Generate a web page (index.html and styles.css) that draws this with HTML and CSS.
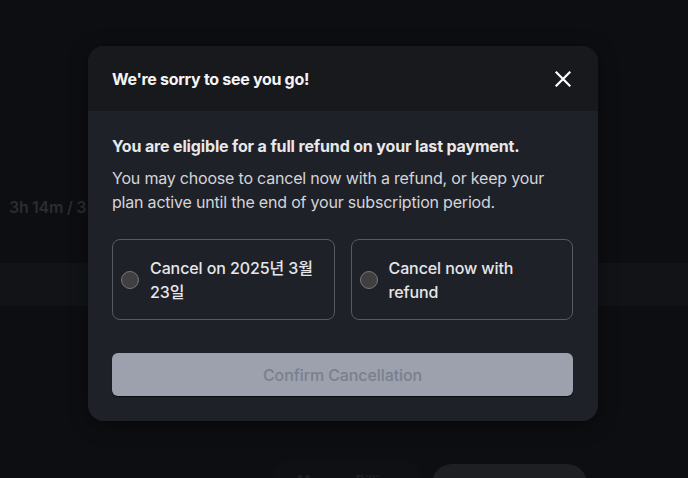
FILE: index.html
```html
<!DOCTYPE html>
<html lang="en">
<head>
<meta charset="utf-8">
<link rel="stylesheet" href="styles.css">
</head>
<body>
<div class="page">
  <div class="bg-stat">3h 14m / 3</div>
  <div class="bg-band"></div>
  <div class="bg-actions">
    <span class="bg-pill bg-pill-dark">Manage Billing</span>
    <span class="bg-pill bg-pill-light">Manage Billing</span>
  </div>
</div>
<div class="overlay">
  <div class="modal">
    <div class="modal-header">
      <h2 class="modal-title">We're sorry to see you go!</h2>
      <button class="close-btn" aria-label="Close">
        <svg width="16" height="16" viewBox="0 0 16 16"><path d="M1.5 1.5L14.5 14.5M14.5 1.5L1.5 14.5" stroke="#ffffff" stroke-width="2.2" stroke-linecap="square" fill="none"/></svg>
      </button>
    </div>
    <div class="modal-body">
      <p class="lead">You are eligible for a full refund on your last payment.</p>
      <p class="desc">You may choose to cancel now with a refund, or keep your plan active until the end of your subscription period.</p>
      <div class="options">
        <label class="option"><span class="radio"></span><span class="option-text">Cancel on 2025년 3월 23일</span></label>
        <label class="option"><span class="radio"></span><span class="option-text">Cancel now with refund</span></label>
      </div>
      <button class="confirm-btn">Confirm Cancellation</button>
    </div>
  </div>
</div>
</body>
</html>
```

FILE: styles.css
```css
html, body {
  margin: 0;
  padding: 0;
}
body {
  width: 688px;
  height: 478px;
  overflow: hidden;
  background: #0d0e11;
  font-family: "Inter", "Noto Sans CJK KR", sans-serif;
  position: relative;
}
.page {
  height: 478px;
  overflow: hidden;
  display: flex;
  flex-direction: column;
}
.page > * {
  flex: none;
}
.bg-stat {
  margin-top: 196px;
  padding-left: 9px;
  white-space: nowrap;
  font-size: 16px;
  font-weight: 600;
  color: #2b2c30;
  line-height: 22px;
  letter-spacing: -0.3px;
}
.bg-band {
  margin-top: 45px;
  height: 43px;
  background: #121317;
}
.bg-actions {
  margin-top: 154px;
  display: flex;
  align-items: flex-start;
  gap: 10px;
  padding-left: 272px;
}
.bg-pill {
  height: 40px;
  border-radius: 20px;
  font-size: 14px;
  font-weight: 600;
  line-height: 16px;
  padding: 13px 0 0;
  text-align: center;
  white-space: nowrap;
  box-sizing: border-box;
  color: #2a2b30;
}
.bg-pill-dark {
  background: #0f1013;
  width: 150px;
  color: #1e1f23;
}
.bg-pill-light {
  background: #1e1f23;
  width: 155px;
  margin-top: 4px;
  color: #34353a;
}
.overlay {
  position: absolute;
  inset: 0;
  display: flex;
  justify-content: flex-start;
  align-items: flex-start;
  padding: 46px 0 0 88px;
}
.modal {
  width: 510px;
  border-radius: 16px;
  overflow: hidden;
  background: #1f2129;
  box-shadow: 0 4px 20px rgba(0,0,0,0.4);
}
.modal-header {
  height: 65px;
  background: #18191d;
  display: flex;
  align-items: center;
  justify-content: space-between;
  padding: 0 27px 0 24px;
}
.modal-title {
  margin: 0;
  font-size: 16px;
  font-weight: 700;
  color: #f5f5f5;
  letter-spacing: -0.3px;
}
.close-btn {
  background: none;
  border: 0;
  padding: 0;
  width: 16px;
  height: 16px;
  display: block;
}
.close-btn svg { display: block; }
.modal-body {
  padding: 23px 25px 25px 24px;
}
.lead {
  margin: 0;
  font-size: 16px;
  line-height: 24px;
  font-weight: 700;
  color: #e8e8ea;
  letter-spacing: -0.15px;
}
.desc {
  margin: 8px 0 0;
  font-size: 16px;
  line-height: 24px;
  color: #d4d5d8;
  letter-spacing: -0.2px;
}
.options {
  margin-top: 25px;
  display: grid;
  grid-template-columns: 1fr 1fr;
  gap: 16px;
}
.option {
  display: flex;
  align-items: center;
  gap: 11px;
  border: 1px solid #585a62;
  border-radius: 8px;
  padding: 16px 14px 15px 8px;
}
.radio {
  flex: none;
  width: 16px;
  height: 16px;
  border: 1px solid #75767a;
  border-radius: 50%;
  background: #404040;
}
.option-text {
  font-size: 16px;
  line-height: 24px;
  font-weight: 500;
  color: #e6e6e8;
  letter-spacing: -0.1px;
}
.confirm-btn {
  margin-top: 33px;
  width: 100%;
  height: 43px;
  border: 0;
  border-radius: 6px;
  background: #9ca1ad;
  color: #7a7f8e;
  font-family: inherit;
  font-size: 16px;
  font-weight: 500;
  letter-spacing: -0.1px;
  box-shadow: 0 1px 1px rgba(0,0,0,0.7);
  display: block;
}
```
